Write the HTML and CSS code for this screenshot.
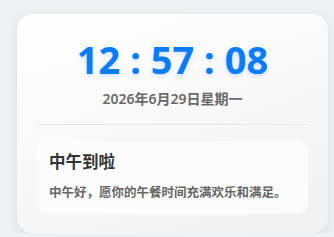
FILE: index.html
```html
<!DOCTYPE html>
<html lang="zh-CN">
<head>
    <meta charset="UTF-8">
    <meta name="viewport" content="width=device-width, initial-scale=1.0">
    <title>中午到啦</title>
    <link rel="stylesheet" href="styles.css">
</head>
<body>
    <div class="card">
        <div class="clock">12 : 57 : 08</div>
        <div class="date">2026年6月29日星期一</div>
        <div class="divider"></div>
        <div class="greeting">
            <h2>中午到啦</h2>
            <p>中午好，愿你的午餐时间充满欢乐和满足。</p>
        </div>
    </div>
</body>
</html>
```

FILE: styles.css
```css
* {
    box-sizing: border-box;
    font-family: "Noto Sans", "Noto Sans CJK SC", sans-serif;
}

body {
    margin: 0;
    padding: 14px 0 0 17px;
    background-color: #eff0f2;
}

.card {
    width: 311px;
    padding: 21px 20px 19px;
    background: linear-gradient(160deg, #ffffff, #f1f1f2);
    border-radius: 16px;
    box-shadow: 0 4px 12px rgba(0, 0, 0, 0.08);
}

.clock {
    font-size: 38px;
    line-height: 48px;
    font-weight: bold;
    color: #0a7cf8;
    text-align: center;
    text-shadow: 0 2px 4px rgba(10, 124, 248, 0.2);
}

.date {
    margin-top: 6px;
    font-size: 14px;
    line-height: 20px;
    font-weight: 600;
    color: #6a6a6a;
    text-align: center;
}

.divider {
    height: 1px;
    margin: 15px 0 16px;
    background-color: #e6e6e6;
}

.greeting {
    padding: 10px 12px 13px;
    background-color: #fcfcfc;
    border-radius: 10px;
}

.greeting h2 {
    margin: 0;
    font-size: 16.5px;
    line-height: 22px;
    font-weight: 600;
    color: #333;
}

.greeting p {
    margin: 12px 0 0;
    font-size: 12.5px;
    line-height: 16px;
    font-weight: 600;
    color: #666;
}
```
